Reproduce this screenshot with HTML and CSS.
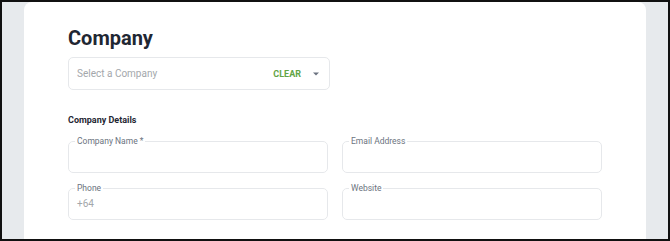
FILE: index.html
```html
<!DOCTYPE html>
<html>
<head>
<meta charset="utf-8">
<link rel="stylesheet" href="styles.css">
</head>
<body>
<div class="frame">
  <div class="card">
    <h1 class="title">Company</h1>
    <div class="select">
      <span class="placeholder">Select a Company</span>
      <span class="clear">CLEAR</span>
      <svg class="caret" width="6" height="4" viewBox="0 0 6 4"><path d="M0 0.5 L6 0.5 L3 3.5 Z" fill="#6b7280"/></svg>
    </div>
    <h2 class="section">Company Details</h2>
    <div class="grid">
      <fieldset class="field"><legend>Company Name *</legend><div class="value"></div></fieldset>
      <fieldset class="field"><legend>Email Address</legend><div class="value"></div></fieldset>
      <fieldset class="field"><legend>Phone</legend><div class="value muted">+64</div></fieldset>
      <fieldset class="field"><legend>Website</legend><div class="value"></div></fieldset>
    </div>
  </div>
</div>
</body>
</html>
```
FILE: styles.css
```css
html, body {
  margin: 0;
  padding: 0;
}
body {
  font-family: Roboto, "Liberation Sans", Arial, sans-serif;
}
.frame {
  box-sizing: border-box;
  width: 670px;
  height: 241px;
  border: 2px solid #111;
  background: #e7eaed;
  padding: 0 22px;
  overflow: hidden;
}
.card {
  background: #fff;
  border-radius: 8px 8px 0 0;
  padding: 24px 44px 0;
  height: 300px;
}
.title {
  margin: 0;
  font-size: 20px;
  line-height: 24px;
  font-weight: 700;
  color: #1f2733;
}
.select {
  box-sizing: border-box;
  margin-top: 7px;
  width: 262px;
  height: 33px;
  border: 1px solid #e6e8eb;
  border-radius: 5px;
  display: flex;
  align-items: center;
  padding: 0 10px 0 8px;
}
.placeholder {
  flex: 1;
  font-size: 10px;
  color: #a3a7ab;
}
.clear {
  font-size: 9px;
  font-weight: 700;
  color: #62a446;
  margin-right: 12px;
}
.caret {
  display: block;
}
.section {
  margin: 24px 0 10px;
  font-size: 9px;
  line-height: 12px;
  font-weight: 700;
  color: #1f2733;
}
.grid {
  display: grid;
  grid-template-columns: 1fr 1fr;
  column-gap: 14px;
  row-gap: 10px;
}
.field {
  margin: 0;
  min-width: 0;
  border: 1px solid #e6e8eb;
  border-radius: 5px;
  padding: 4px 7px 8px 8px;
}
.field legend {
  font-size: 8.5px;
  line-height: 10px;
  padding: 0 2px;
  margin-left: -2px;
  color: #6b7380;
}
.value {
  height: 14px;
  font-size: 10px;
  line-height: 14px;
}
.muted {
  color: #a3a7ab;
}
```
